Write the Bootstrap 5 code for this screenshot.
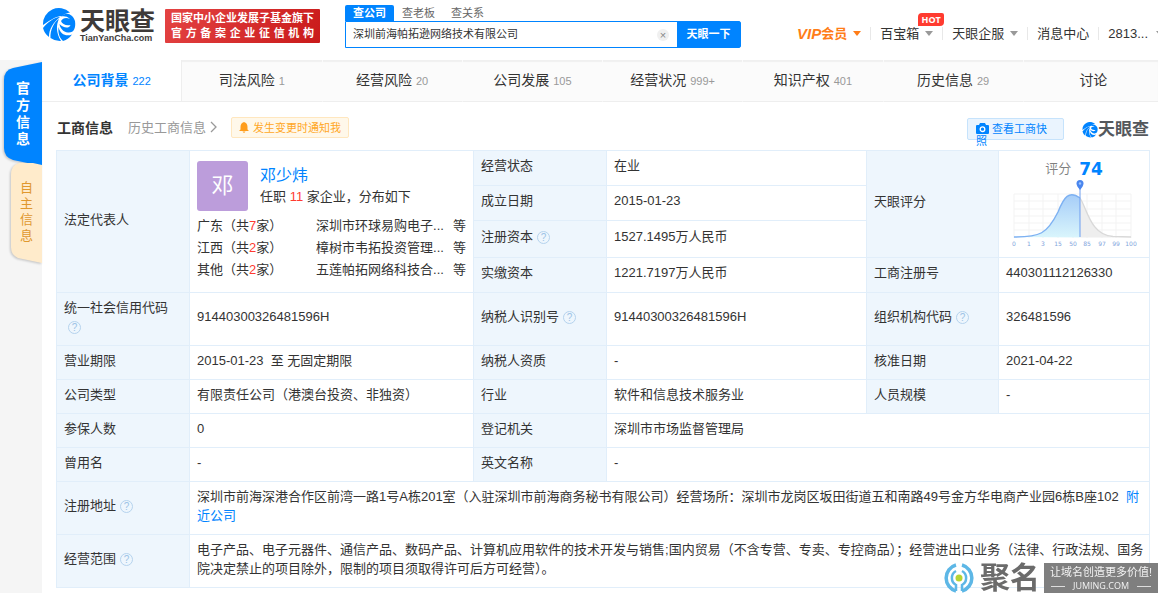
<!DOCTYPE html>
<html lang="zh-CN">
<head>
<meta charset="utf-8">
<meta name="viewport" content="width=device-width, initial-scale=1">
<title>天眼查 - 工商信息</title>
<link href="https://cdn.jsdelivr.net/npm/bootstrap@5.3.0/dist/css/bootstrap.min.css" rel="stylesheet">
<style>
  :root { --blue: #0084ff; --line: #e1eefa; --label: #eef6fd; }
  body { font: 13px/19px "Liberation Sans", "Noto Sans CJK SC", sans-serif; color: #333; background: #f5f5f5; overflow-x: hidden; }
  a { color: var(--blue); text-decoration: none; }
  .icon { display: block; flex: none; }

  /* header */
  .site-header { height: 60px; background: #fff; padding-left: 42px; overflow: hidden; }
  .brand { margin-top: 8px; }
  .brand-name { font-size: 25px; line-height: 26px; font-weight: 700; color: #3e3a39; }
  .brand-url { font-size: 9px; line-height: 8px; font-weight: 700; color: #3e3a39; }
  .banner { width: 155px; height: 34px; padding: 2px 6px; margin: 9px 0 0 10px; color: #fff; font-weight: 700; font-size: 11px; line-height: 15px; border-radius: 1px; background: linear-gradient(120deg, #e44343, #c91a1a); white-space: nowrap; }
  .banner div { text-align: justify; text-align-last: justify; }
  .search { width: 396px; margin: 5px 0 0 25px; }
  .search-tab { border: 0; background: none; padding: 0 8px; font-size: 11px; line-height: 16px; height: 16px; color: #666; }
  .search-tab.on { background: var(--blue); color: #fff; font-weight: 700; border-radius: 2px 2px 0 0; }
  .search-box { height: 27px; border: 1px solid var(--blue); border-radius: 0 2px 2px 0; }
  .search-box input { border: 0; outline: 0; min-width: 0; padding: 0 7px; font-size: 11px; color: #333; }
  .clear-btn { width: 12px; height: 12px; padding: 0; margin-right: 8px; border: 0; border-radius: 50%; background: #f0f0f0; color: #888; font-size: 11px; line-height: 10px; }
  .go-btn { width: 63px; border: 0; border-radius: 0; background: var(--blue); color: #fff; font-size: 11px; font-weight: 700; }
  .user-menu { margin: 27px -6px 0 0; white-space: nowrap; }
  .user-menu > a { color: #333; padding: 0 9px; border-left: 1px solid #e8e8e8; line-height: 13px; height: 13px; display: flex; align-items: center; position: relative; }
  .user-menu > a:first-child { border: 0; color: #ff7d18; font-weight: 700; }
  .user-menu em { font-size: 15px; }
  .caret { border: 4px solid transparent; border-top: 5px solid #999; border-bottom: 0; margin-left: 6px; }
  .user-menu > a:first-child .caret { border-top-color: #ff7d18; }
  .hot { position: absolute; right: -2px; top: -14px; width: 26px; height: 13px; border-radius: 4px 2px 4px 0; background: #ff3b30; color: #fff; font: 700 9px/13px "Open Sans", sans-serif; text-align: center; }

  /* side tabs */
  .side { width: 42px; flex: none; }
  .side button { display: block; position: relative; margin-left: auto; border: 0; padding: 0; background: none; isolation: isolate; }
  .side svg { position: absolute; left: 0; top: 0; z-index: -1; overflow: visible; }
  .side svg path { filter: drop-shadow(-1px 1px 1px #0003); }
  .side-a { width: 38px; height: 99px; color: #fff; font-size: 14px; line-height: 17px; font-weight: 700; }
  .side-b { width: 31px; height: 98px; color: #e0982f; font-size: 13px; line-height: 16px; }
  .side span { display: block; width: 14px; margin: 0 auto; }

  /* section tabs */
  .panel { background: #fff; min-width: 0; }
  .sections { overflow: hidden; background: #fbfbfb; box-shadow: inset 0 2px 1px #f0f0f0; }
  .section-row { margin-right: -6px; }
  .section-row a { flex: 1 0 0; height: 42px; display: flex; align-items: center; justify-content: center; gap: 4px; color: #333; font-size: 14px; border-bottom: 1px solid #eee; border-right: 1px solid #fbfbfb; white-space: nowrap; }
  .section-row small { font-size: 11px; color: #999; padding-top: 2px; }
  .section-row a.on { background: #fff; color: var(--blue); font-weight: 700; border-right-color: #eee; }
  .section-row a.on small { color: var(--blue); font-weight: 400; }

  /* title row */
  .title-row { height: 48px; padding: 0 9px 0 15px; }
  .title-row h1 { font-size: 14px; line-height: 20px; font-weight: 700; margin: 4px 0 0; }
  .history { color: #999; margin: 2px 0 0 15px; }
  .notify { height: 21px; margin: 3px 0 0 14px; padding: 0 7px; border: 1px solid #ffe7bf; border-radius: 2px; background: #fff8ea; color: #ffa726; font-size: 11px; line-height: 18px; }
  .snapshot { width: 97px; height: 22px; margin: 16px 18px 0 auto; padding: 4px 8px; border: 1px solid #c6e3fc; border-radius: 2px; background: #eaf4fe; font-size: 11px; line-height: 12px; text-align: left; color: var(--blue); }
  .snapshot svg { display: inline-block; vertical-align: -1px; margin-right: 3px; }
  .mini-name { font-size: 17px; line-height: 22px; font-weight: 700; color: #55585c; }

  /* company table */
  .table-wrap { padding: 0 8px 6px 14px; }
  .info { table-layout: fixed; margin: 0; border-color: var(--line); color: #333; }
  .info th, .info td { padding: 0 7px 5px; border: 1px solid var(--line); vertical-align: middle; font-weight: 400; color: #333; overflow-wrap: anywhere; }
  .info td.long-text { padding-right: 0; }
  .info th { background: var(--label); }
  .r34 { height: 34px; } .r35 { height: 35px; } .r37 { height: 37px; } .r53 { height: 53px; }
  .help { display: inline-block; width: 13px; height: 13px; border: 1px solid #b5d3ee; border-radius: 50%; color: #9cc3e6; font-size: 10px; line-height: 11px; text-align: center; margin-left: 4px; vertical-align: 0; }
  .avatar { width: 51px; height: 50px; border-radius: 3px; background: #bc9ddb; color: #fff; font-size: 22px; line-height: 49px; text-align: center; flex: none; }
  .person { font-size: 16px; line-height: 22px; }
  .red { color: #ff3b30; }
  .places { line-height: 22px; }
  .places .region { width: 119px; flex: none; }
  .score-num { font: 700 17px/20px "DejaVu Sans", sans-serif; color: var(--blue); }

  /* watermark */
  .watermark { position: fixed; right: 0; bottom: 0; }
  .wm-name { font-size: 30px; line-height: 30px; color: #6b6b6b; font-weight: 700; margin: 0 4px 0 6px; }
  .wm-box { width: 114px; height: 30px; background: #7f7f7f; color: #f2f2f2; font-size: 11px; line-height: 18px; text-align: center; white-space: nowrap; }
  .wm-url { font: 9px/10px "Open Sans", sans-serif; gap: 8px; }
  .wm-url i { height: 1px; width: 14px; background: #ddd; }
</style>
</head>
<body>
<svg class="d-none" aria-hidden="true">
  <symbol id="eye" viewBox="0 0 34 34">
    <path fill="#0084ff" d="M1 17A16 16 0 0 1 28 4.500C25 5 22 6 20 8C13 8 6 14 1 17Z"/>
    <path fill="#0084ff" d="M1 20C6 14 12 9.500 18 9C11 15 7 21 7 29A16 16 0 0 1 1 20Z"/>
    <path fill="#0084ff" d="M8.500 30C8 22 12 14 17 11C14 17 14 25 19 33A16 16 0 0 1 8.500 30Z"/>
    <path fill="#0084ff" d="M16.500 19C18 26 24 29 30 26.500A16 16 0 0 1 21 33C17 29 16 25 16.500 19Z"/>
    <path fill="#0084ff" d="M19 8.500C24 3 31 6 33 13C34 20 32 25 26 24.500C21 24 18 20 17.500 16C21 20 27 21 28.500 17C24 18 20 16 19 13C21 10 24 9 28 11C25 8 22 8 19 8.500Z"/>
  </symbol>
</svg>

<header class="site-header d-flex align-items-start">
  <a href="#" class="brand d-flex" aria-label="天眼查">
    <svg class="icon" width="34" height="34"><use href="#eye"/></svg>
    <span class="ms-1">
      <span class="d-block brand-name">天眼查</span>
      <span class="d-block brand-url">TianYanCha.com</span>
    </span>
  </a>
  <div class="banner"><div>国家中小企业发展子基金旗下</div><div>官方备案企业征信机构</div></div>
  <form class="search" role="search" onsubmit="return false">
    <div class="d-flex">
      <button type="button" class="search-tab on">查公司</button>
      <button type="button" class="search-tab">查老板</button>
      <button type="button" class="search-tab">查关系</button>
    </div>
    <div class="search-box d-flex align-items-stretch">
      <input class="flex-grow-1" type="text" aria-label="搜索公司" value="深圳前海帕拓逊网络技术有限公司">
      <button type="button" class="clear-btn align-self-center" aria-label="清除">×</button>
      <button type="submit" class="go-btn">天眼一下</button>
    </div>
  </form>
  <nav class="user-menu d-flex ms-auto">
    <a href="#"><em>VIP</em>会员<span class="caret"></span></a>
    <a href="#">百宝箱<span class="caret"></span><span class="hot">HOT</span></a>
    <a href="#">天眼企服<span class="caret"></span></a>
    <a href="#">消息中心</a>
    <a href="#" class="pe-0">2813...<span class="caret ms-2"></span></a>
  </nav>
</header>

<div class="d-flex">
  <aside class="side pt-1">
    <button type="button" class="side-a">
      <svg width="38" height="102" aria-hidden="true"><path d="M38 -2V102L9 96Q0 93 0 84V16Q0 6 9 4Z" fill="#0084ff"/></svg>
      <span>官方信息</span>
    </button>
    <button type="button" class="side-b">
      <svg width="31" height="98" aria-hidden="true"><path d="M31 100V2L22 0H8Q0 2 0 12V84Q0 92 7 95Z" fill="#ffebcb"/></svg>
      <span>自主信息</span>
    </button>
  </aside>

  <main class="panel flex-grow-1">
    <nav class="sections">
      <div class="section-row d-flex">
        <a href="#" class="on">公司背景<small>222</small></a>
        <a href="#">司法风险<small>1</small></a>
        <a href="#">经营风险<small>20</small></a>
        <a href="#">公司发展<small>105</small></a>
        <a href="#">经营状况<small>999+</small></a>
        <a href="#">知识产权<small>401</small></a>
        <a href="#">历史信息<small>29</small></a>
        <a href="#">讨论</a>
      </div>
    </nav>

    <div class="title-row d-flex align-items-center">
      <h1>工商信息</h1>
      <a href="#" class="history d-flex align-items-center">历史工商信息<svg class="icon ms-1" width="7" height="12" viewBox="0 0 7 12"><path d="M1 1l5 5-5 5" fill="none" stroke="#999" stroke-width="1.300"/></svg></a>
      <button type="button" class="notify d-flex align-items-center">
        <svg class="icon me-1" width="10" height="11" viewBox="0 0 10 11"><path d="M5 0Q8.500 1 8.500 5V7.500L10 9H0L1.500 7.500V5Q1.500 1 5 0ZM3.500 9.500h3Q5 12 3.500 9.500Z" fill="#ff9d1c"/></svg>发生变更时通知我
      </button>
      <button type="button" class="snapshot align-self-start"><svg width="13" height="11" viewBox="0 0 13 11"><path d="M4 0h5l1 2h2q1 0 1 1v7q0 1-1 1H1q-1 0-1-1V3q0-1 1-1h2Z" fill="#0084ff"/><circle cx="6.500" cy="6.200" r="2.300" fill="none" stroke="#fff" stroke-width="1.300"/></svg>查看工商快照</button>
      <div class="d-flex align-items-center mt-2">
        <svg class="icon" width="16" height="16"><use href="#eye"/></svg><span class="mini-name">天眼查</span>
      </div>
    </div>

    <div class="table-wrap">
      <table class="table info">
        <colgroup><col style="width:12.170%"><col style="width:25.980%"><col style="width:12.170%"><col style="width:23.790%"><col style="width:12.080%"><col style="width:13.810%"></colgroup>
        <tbody>
          <tr class="r35">
            <th scope="row" rowspan="4">法定代表人</th>
            <td rowspan="4">
              <div class="d-flex pt-1">
                <div class="avatar">邓</div>
                <div class="ps-2 ms-1 pt-1">
                  <a href="#" class="person d-block">邓少炜</a>
                  <div>任职 <span class="red">11</span> 家企业，分布如下</div>
                </div>
              </div>
              <div class="places pt-1">
                <div class="d-flex"><span class="region">广东（共<span class="red">7</span>家）</span><span class="text-truncate">深圳市环球易购电子...</span><span class="ms-auto">等</span></div>
                <div class="d-flex"><span class="region">江西（共<span class="red">2</span>家）</span><span class="text-truncate">樟树市韦拓投资管理...</span><span class="ms-auto">等</span></div>
                <div class="d-flex"><span class="region">其他（共<span class="red">2</span>家）</span><span class="text-truncate">五莲帕拓网络科技合...</span><span class="ms-auto">等</span></div>
              </div>
            </td>
            <th scope="row">经营状态</th><td>在业</td>
            <th scope="row" rowspan="3">天眼评分</th>
            <td rowspan="3">
              <div class="d-flex justify-content-center align-items-center gap-2 pt-1"><span class="text-black-50">评分</span><span class="score-num">74</span></div>
              <svg class="d-block mx-auto" width="126" height="70" viewBox="0 0 126 70" role="img" aria-label="评分分布">
                <defs><linearGradient id="fill" x2="0" y2="1"><stop stop-color="#a6cdf8"/><stop offset="1" stop-color="#d9f5fc"/></linearGradient></defs>
                <path d="M3 15H120M3 22H120M3 30H120M3 37H120M3 44H120M3 51H120M3 15V59M18 15V59M32 15V59M47 15V59M62 15V59M76 15V59M91 15V59M105 15V59M120 15V59" stroke="#f3f3f3" fill="none"/>
                <path d="M69 19C76 29 81 57 104 58.500H69Z" fill="#eee"/>
                <path d="M69 19C76 29 79 56 102 57.500L120 58" fill="none" stroke="#d9d9d9" stroke-width="1.300"/>
                <path d="M3 58C29 58 36 55 47 33C53 18 58 11 69 19V58.500Z" fill="url(#fill)"/>
                <path d="M3 58C29 58 36 55 47 33C53 18 58 11 69 19" fill="none" stroke="#7db1f2" stroke-width="1.400"/>
                <path d="M69 8V58" stroke="#6d9df0"/>
                <path d="M69 11Q65.500 7 65.500 4.500A3.500 3.500 0 0 1 72.500 4.500Q72.500 7 69 11Z" fill="#4a86ee"/><circle cx="69" cy="4.500" r="1.200" fill="#9cc4ff"/>
                <g font-family="DejaVu Sans" font-size="6" fill="#7fa4dc" text-anchor="middle"><text x="3" y="67">0</text><text x="18" y="67">1</text><text x="32" y="67">3</text><text x="47" y="67">15</text><text x="62" y="67">50</text><text x="76" y="67">85</text><text x="91" y="67">97</text><text x="105" y="67">99</text><text x="120" y="67">100</text></g>
              </svg>
            </td>
          </tr>
          <tr class="r35"><th scope="row">成立日期</th><td>2015-01-23</td></tr>
          <tr class="r37"><th scope="row">注册资本<span class="help">?</span></th><td>1527.1495万人民币</td></tr>
          <tr class="r35"><th scope="row">实缴资本</th><td>1221.7197万人民币</td><th scope="row">工商注册号</th><td>440301112126330</td></tr>
          <tr class="r53"><th scope="row">统一社会信用代码 <span class="help">?</span></th><td>91440300326481596H</td><th scope="row">纳税人识别号<span class="help">?</span></th><td>91440300326481596H</td><th scope="row">组织机构代码<span class="help">?</span></th><td>326481596</td></tr>
          <tr class="r34"><th scope="row">营业期限</th><td>2015-01-23&nbsp; 至 无固定期限</td><th scope="row">纳税人资质</th><td>-</td><th scope="row">核准日期</th><td>2021-04-22</td></tr>
          <tr class="r34"><th scope="row">公司类型</th><td>有限责任公司（港澳台投资、非独资）</td><th scope="row">行业</th><td>软件和信息技术服务业</td><th scope="row">人员规模</th><td>-</td></tr>
          <tr class="r34"><th scope="row">参保人数</th><td>0</td><th scope="row">登记机关</th><td colspan="3">深圳市市场监督管理局</td></tr>
          <tr class="r34"><th scope="row">曾用名</th><td>-</td><th scope="row">英文名称</th><td colspan="3">-</td></tr>
          <tr class="r53"><th scope="row">注册地址<span class="help">?</span></th><td colspan="5" class="long-text">深圳市前海深港合作区前湾一路1号A栋201室（入驻深圳市前海商务秘书有限公司）经营场所：深圳市龙岗区坂田街道五和南路49号金方华电商产业园6栋B座102&nbsp; <a href="#">附近公司</a></td></tr>
          <tr class="r53"><th scope="row">经营范围<span class="help">?</span></th><td colspan="5" class="long-text">电子产品、电子元器件、通信产品、数码产品、计算机应用软件的技术开发与销售;国内贸易（不含专营、专卖、专控商品）；经营进出口业务（法律、行政法规、国务院决定禁止的项目除外，限制的项目须取得许可后方可经营）。</td></tr>
        </tbody>
      </table>
    </div>
  </main>
</div>

<div class="watermark d-flex align-items-center">
  <svg class="icon" width="30" height="30" viewBox="0 0 30 30" fill="none" stroke="#5db7e6"><circle cx="15" cy="15" r="3.500" fill="#b5d334" stroke="none"/><path d="M12 2A13.500 13.500 0 0 0 12 28M18 2A13.500 13.500 0 0 1 18 28" stroke-width="3.500"/><path d="M12 8A8 8 0 0 0 12 22V28M18 28V22A8 8 0 0 0 18 8" stroke-width="2.500"/></svg>
  <span class="wm-name">聚名</span>
  <div class="wm-box">让域名创造更多价值!<div class="wm-url d-flex align-items-center justify-content-center"><i></i>JUMING.COM<i></i></div></div>
</div>
<script src="https://cdn.jsdelivr.net/npm/bootstrap@5.3.0/dist/js/bootstrap.bundle.min.js"></script>
</body>
</html>
